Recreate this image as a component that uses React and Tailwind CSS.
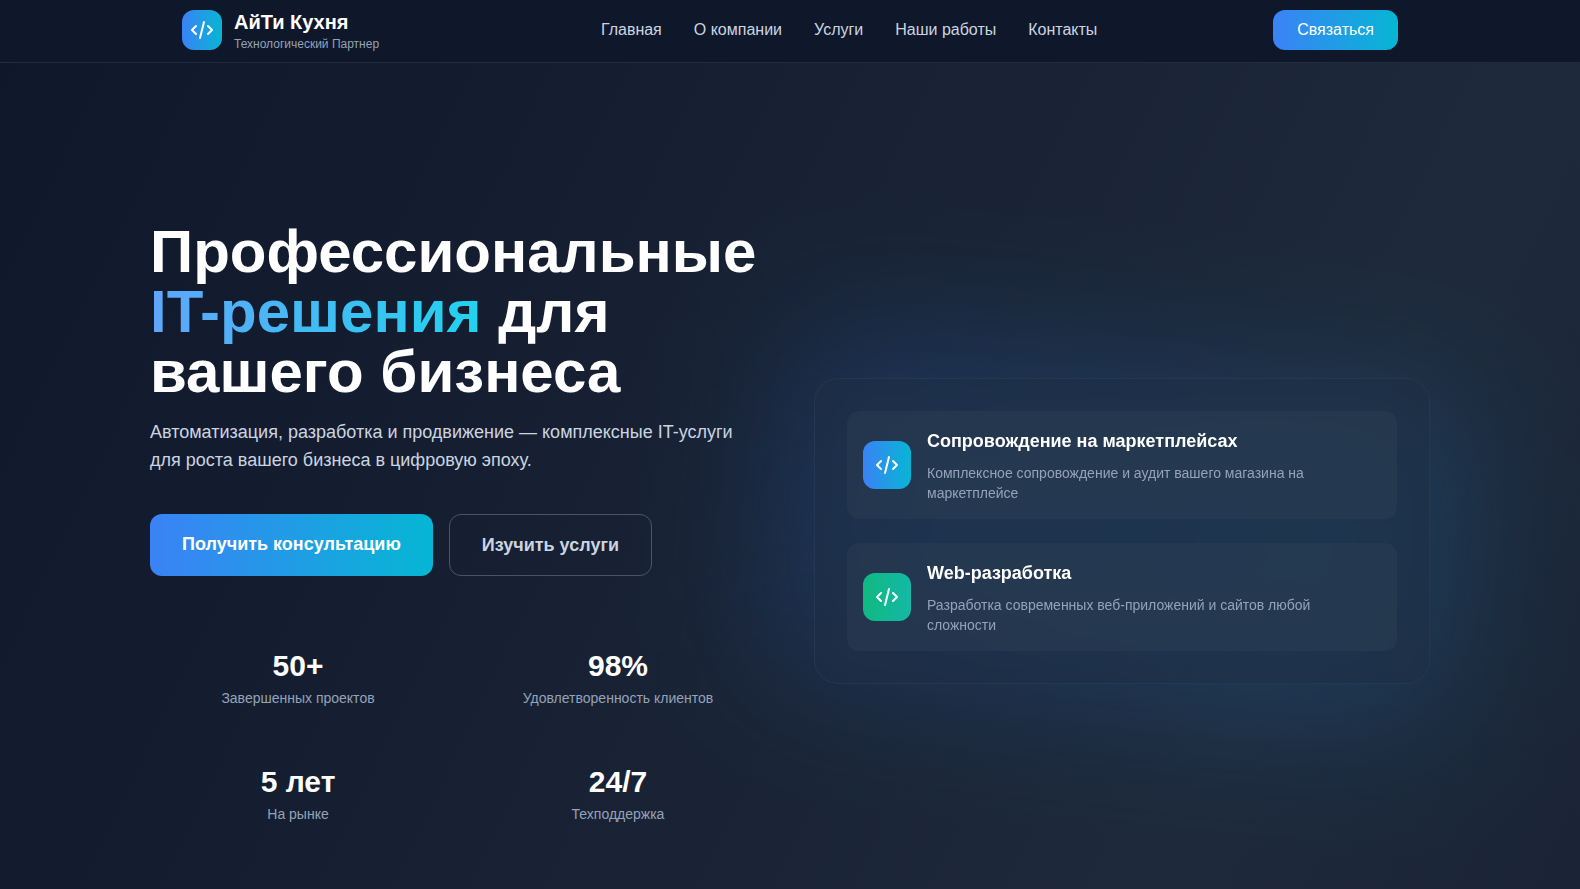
const navLinks = [
  { href: '#home', label: 'Главная' },
  { href: '#about', label: 'О компании' },
  { href: '#services', label: 'Услуги' },
  { href: '#portfolio', label: 'Наши работы' },
  { href: '#contacts', label: 'Контакты' },
];

const stats = [
  { value: '50+', label: 'Завершенных проектов' },
  { value: '98%', label: 'Удовлетворенность клиентов' },
  { value: '5 лет', label: 'На рынке' },
  { value: '24/7', label: 'Техподдержка' },
];

const services = [
  {
    title: 'Сопровождение на маркетплейсах',
    text: 'Комплексное сопровождение и аудит вашего магазина на маркетплейсе',
    color: 'from-[#3b82f6] to-[#06b6d4]',
  },
  {
    title: 'Web-разработка',
    text: 'Разработка современных веб-приложений и сайтов любой сложности',
    color: 'from-[#10b981] to-[#14b8a6]',
  },
];

function CodeIcon() {
  return (
    <svg className="w-6 h-6 text-white" fill="none" stroke="currentColor" viewBox="0 0 24 24" aria-hidden="true">
      <path strokeLinecap="round" strokeLinejoin="round" strokeWidth={2} d="M10 20l4-16m4 4l4 4-4 4M6 16l-4-4 4-4" />
    </svg>
  );
}

function Header() {
  return (
    <header className="bg-[#0f172a] border-b border-[#1e2d40]">
      <div className="max-w-7xl mx-auto px-8 pt-2 pb-2.5 flex items-center justify-between">
        <a href="#home" className="flex items-center gap-3 min-w-[243px]">
          <div className="w-10 h-10 rounded-xl bg-linear-to-r/srgb from-[#3b82f6] to-[#06b6d4] flex items-center justify-center">
            <CodeIcon />
          </div>
          <div>
            <div className="text-xl font-bold text-white">АйТи Кухня</div>
            <div className="text-xs text-[#94a3b8]">Технологический Партнер</div>
          </div>
        </a>

        <nav className="flex items-center gap-8">
          {navLinks.map((link) => (
            <a key={link.href} href={link.href} className="text-[#cbd5e1] hover:text-white">
              {link.label}
            </a>
          ))}
        </nav>

        <button type="button" className="px-6 py-2 rounded-xl bg-linear-to-r/srgb from-[#3b82f6] to-[#06b6d4] text-white">
          Связаться
        </button>
      </div>
    </header>
  );
}

function ServicesCard() {
  return (
    <div className="relative">
      {/* Glow */}
      <div className="absolute inset-0 bg-linear-to-r/srgb from-[#2f7fe6]/20 to-[#1791cc]/20 rounded-3xl blur-3xl rotate-6 scale-110" />

      <div className="relative bg-[#1e2d44]/50 border border-[#2c4258]/50 rounded-3xl p-8 space-y-6 backdrop-blur-sm">
        {services.map((service) => (
          <div key={service.title} className="flex items-center gap-4 p-4 rounded-xl bg-[#334155]/35">
            <div className={`w-12 h-12 shrink-0 rounded-xl bg-linear-to-r/srgb flex items-center justify-center ${service.color}`}>
              <CodeIcon />
            </div>
            <div>
              <h3 className="text-lg font-semibold text-white mb-2">{service.title}</h3>
              <p className="text-sm text-[#94a3b8]">{service.text}</p>
            </div>
          </div>
        ))}
      </div>
    </div>
  );
}

function Hero() {
  return (
    <section className="overflow-hidden min-h-[calc(100vh-63px)] pt-[159px] pb-12">
      <div className="max-w-7xl mx-auto grid grid-cols-2 gap-12 items-center">
        <div>
          <h1 className="text-6xl leading-none font-bold text-white mb-4">
            Профессиональные{' '}
            <span className="bg-linear-to-r/srgb from-[#60a5fa] to-[#22d3ee] bg-clip-text text-transparent">IT-решения</span>{' '}
            для вашего бизнеса
          </h1>
          <p className="text-lg text-[#cbd5e1] mb-10">
            Автоматизация, разработка и продвижение — комплексные IT-услуги для роста вашего бизнеса в цифровую эпоху.
          </p>

          <div className="flex gap-4 mb-14">
            <a
              href="#contacts"
              className="px-8 py-4 rounded-xl bg-linear-to-r/srgb from-[#3b82f6] to-[#06b6d4] text-white text-lg font-semibold"
            >
              Получить консультацию
            </a>
            <a
              href="#services"
              className="px-8 py-4 rounded-xl border border-[#475569] text-[#cbd5e1] text-lg font-semibold"
            >
              Изучить услуги
            </a>
          </div>

          <div className="grid grid-cols-2 gap-6">
            {stats.map((stat) => (
              <div key={stat.label} className="p-4 text-center">
                <div className="text-3xl font-bold text-white mb-1">{stat.value}</div>
                <div className="text-sm text-[#94a3b8]">{stat.label}</div>
              </div>
            ))}
          </div>
        </div>

        <ServicesCard />
      </div>
    </section>
  );
}

export default function App() {
  return (
    <div className="min-h-screen bg-[#0f172a] bg-linear-to-br/srgb from-[#0f172a] via-[#1e293b] to-[#0f172a] bg-size-[100%_3300px] bg-no-repeat font-['Liberation_Sans',Arial,sans-serif]">
      <Header />
      <Hero />
    </div>
  );
}
